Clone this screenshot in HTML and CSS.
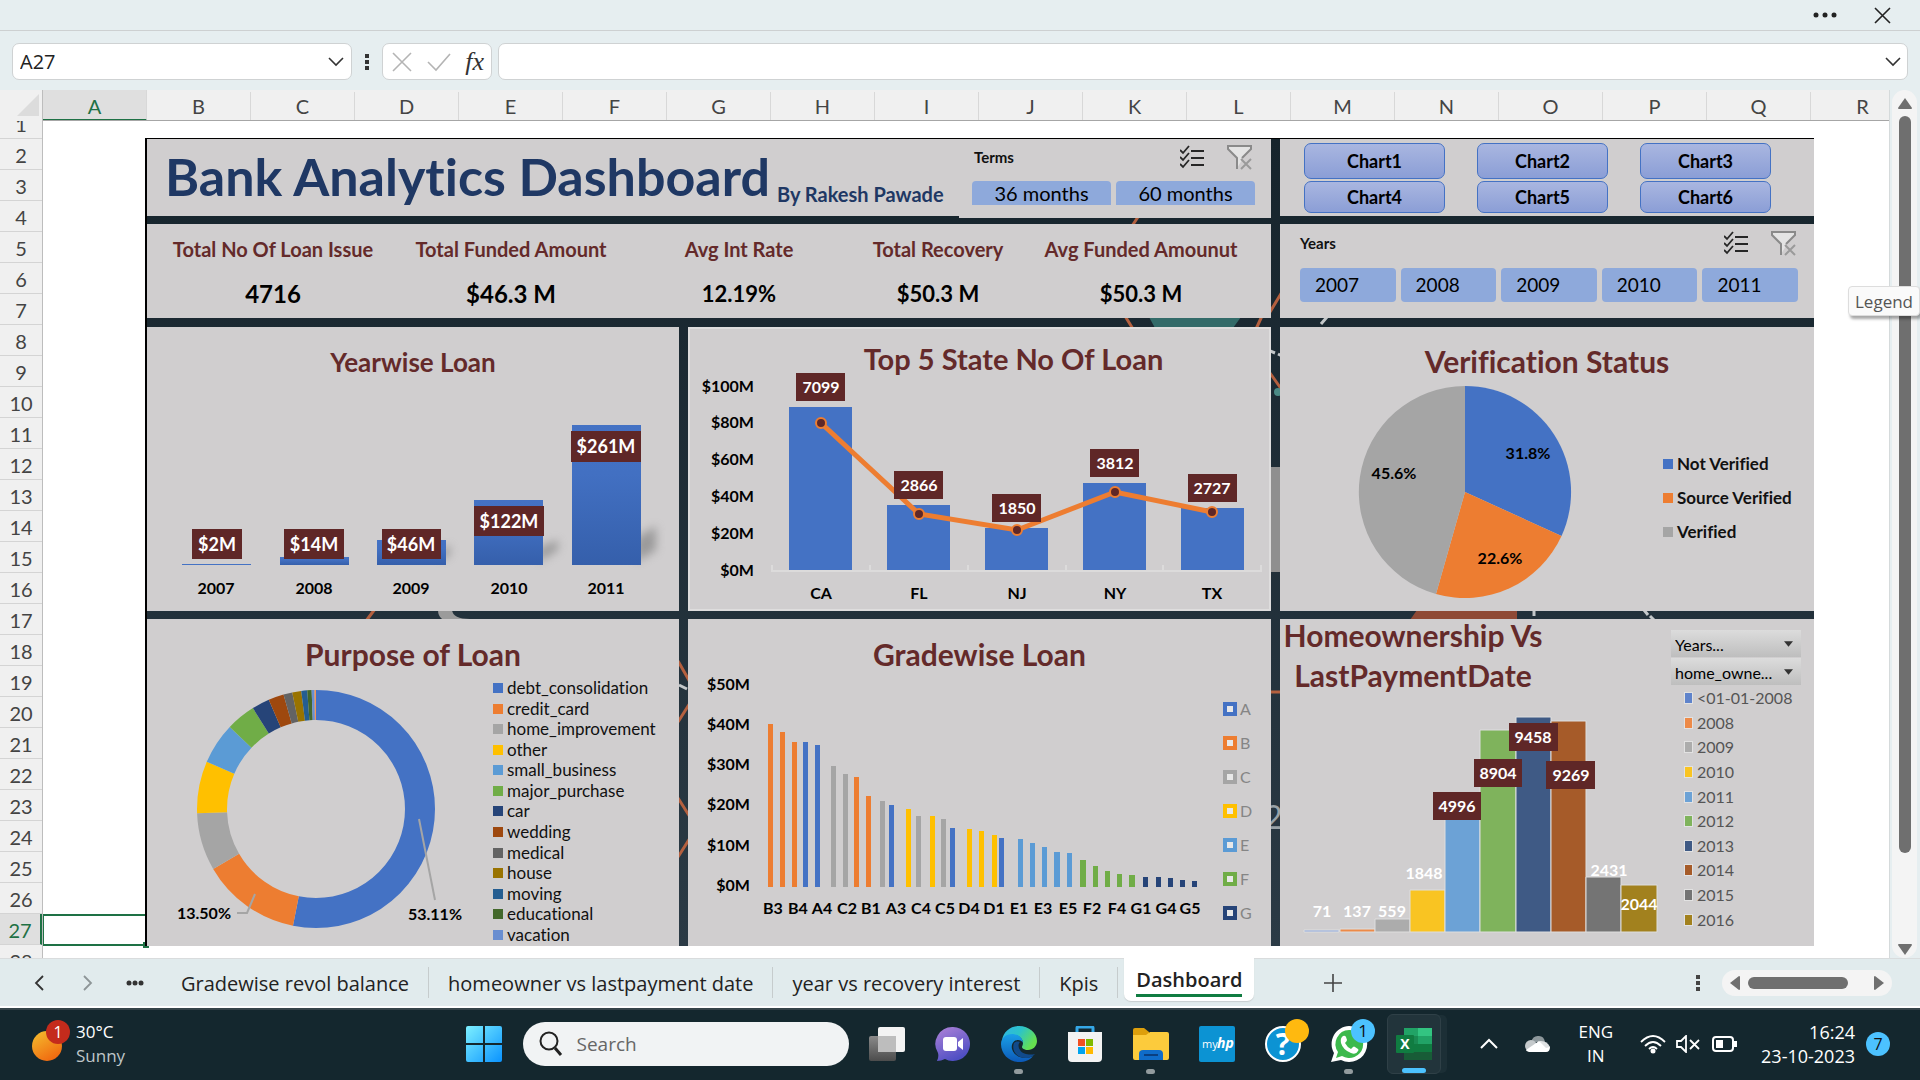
FILE: index.html
```html
<!DOCTYPE html>
<html lang="en">
<head>
<meta charset="utf-8">
<meta name="viewport" content="width=device-width, initial-scale=1">
<title>Bank Analytics Dashboard</title>
<link rel="stylesheet" href="styles.css">
</head>
<body>
<svg class="defs" width="0" height="0" aria-hidden="true">
  <defs>
    <linearGradient id="barBlue" x1="0" y1="0" x2="0" y2="1"><stop offset="0" stop-color="#4472c4"/><stop offset=".35" stop-color="#4270c2"/><stop offset="1" stop-color="#355fab"/></linearGradient>
    <filter id="soft" x="-50%" y="-50%" width="200%" height="200%"><feGaussianBlur stdDeviation="5"/></filter>
    <symbol id="multi" viewBox="0 0 24 24"><path d="M0 5l3 3 6-7M0 12l3 3 6-7M0 19l3 3 6-7M11 6h13M11 13h13M11 20h13" fill="none" stroke="#262626" stroke-width="1.800"/></symbol>
    <symbol id="clear" viewBox="0 0 26 26"><path d="M1 2h23v3l-9 9v2l-5 8V14L1 5z" fill="#e4e4e4"/><path d="M10 25V14L1 5V2h23v3l-9 9" fill="none" stroke="#8a8a8a" stroke-width="2"/><path d="M14 15l10 10M24 15L14 25" stroke="#9a9a9a" stroke-width="2"/></symbol>
    <symbol id="chev" viewBox="0 0 16 10"><path d="M1 1l7 7 7-7" fill="none" stroke="#333" stroke-width="1.600"/></symbol>
  </defs>
</svg>

<header class="titlebar">
  <button class="plain" aria-label="More options"><svg width="24" height="8" viewBox="0 0 24 8"><g fill="#222"><circle cx="3" cy="4" r="2.500"/><circle cx="12" cy="4" r="2.500"/><circle cx="21" cy="4" r="2.500"/></g></svg></button>
  <button class="plain" aria-label="Close"><svg width="18" height="18" viewBox="0 0 18 18"><path d="M1 2l15 15M16 2L1 17" stroke="#222" stroke-width="1.600"/></svg></button>
</header>

<div class="formula-row">
  <div class="box name-box"><input aria-label="Name box" value="A27"><svg width="16" height="10"><use href="#chev"/></svg></div>
  <svg class="grip" width="6" height="18" viewBox="0 0 6 18"><path d="M1 1h4v4H1zM1 7h4v4H1zM1 13h4v4H1z" fill="#333"/></svg>
  <div class="box fx-box">
    <button class="plain" aria-label="Cancel"><svg width="20" height="20" viewBox="0 0 20 20"><path d="M1 1l18 18M19 1L1 19" stroke="#b4b4b4" stroke-width="1.600"/></svg></button>
    <button class="plain" aria-label="Enter"><svg width="24" height="20" viewBox="0 0 24 20"><path d="M1 10l8 8L23 2" fill="none" stroke="#b4b4b4" stroke-width="1.600"/></svg></button>
    <button class="plain fx" aria-label="Insert function">fx</button>
  </div>
  <div class="box formula-box"><input aria-label="Formula bar"><svg width="16" height="10"><use href="#chev"/></svg></div>
</div>

<main class="sheet">
  <div class="corner"><svg width="23" height="23" viewBox="0 0 23 23"><path d="M22 0v22H0z" fill="#dcdcdc"/></svg></div>
  <div class="cols"><span class="on">A</span><span>B</span><span>C</span><span>D</span><span>E</span><span>F</span><span>G</span><span>H</span><span>I</span><span>J</span><span>K</span><span>L</span><span>M</span><span>N</span><span>O</span><span>P</span><span>Q</span><span>R</span></div>
  <div class="vscroll">
    <div class="track">
      <svg width="14" height="12" viewBox="0 0 14 12"><path d="M7 0l7 10q0 1-1 1H1q-1 0-1-1z" fill="#6f6f6f"/></svg>
      <i class="thumb"></i>
      <svg width="14" height="12" viewBox="0 0 14 12"><path d="M7 12l7-10q0-1-1-1H1Q0 1 0 2z" fill="#6f6f6f"/></svg>
    </div>
    <div class="tooltip">Legend</div>
  </div>
  <div class="rows"><span>1</span><span>2</span><span>3</span><span>4</span><span>5</span><span>6</span><span>7</span><span>8</span><span>9</span><span>10</span><span>11</span><span>12</span><span>13</span><span>14</span><span>15</span><span>16</span><span>17</span><span>18</span><span>19</span><span>20</span><span>21</span><span>22</span><span>23</span><span>24</span><span>25</span><span>26</span><span class="on">27</span><span>28</span></div>

  <div class="canvas">
    <div class="selected-cell"></div>
    <div class="dash">
      <svg class="backdrop" viewBox="147 139 1667 807" preserveAspectRatio="none" aria-hidden="true">
        <g fill="none" stroke="#b4603f" stroke-width="3"><path d="M1132 226l8-12M1125 316l8 13M1262 316l-6 13M1270 312l12-20M1270 373l12 17M366 621l9-12M678 661l12 21M678 722l12-19M678 798l12 19M678 857l12-19M1270 692h12"/></g>
        <path d="M1149 317h92l-8 11h-78z" fill="#336b69"/><circle cx="1278" cy="392" r="4" fill="#4b8a85"/>
        <path d="M1271 467h9v105h-9z" fill="#8f8f8f"/>
        <path d="M438 610h14q1 9 18 9h-28q-4-3-4-9z" fill="#9b9b9b"/>
        <path d="M1417 610h100v10h-107z" fill="#8f4a35"/>
        <g stroke="#c4c8ca" stroke-width="3"><path d="M1321 324l6-7M1270 351l5 2M1278 354l4 2M1534 610v6M1644 610l4 5M1650 616l4 4M679 685l8 4"/></g>
        <text x="1264" y="829" font-size="32" fill="#9aa3a8">2</text>
      </svg>

      <section class="panel head">
        <h1>Bank Analytics Dashboard</h1>
        <p class="byline">By Rakesh Pawade</p>
        <div class="slicer terms">
          <div class="slicer-head"><h3>Terms</h3><svg width="24" height="24"><use href="#multi"/></svg><svg width="26" height="26"><use href="#clear"/></svg></div>
          <div class="slicer-items"><button>36 months</button><button>60 months</button></div>
        </div>
      </section>
      <section class="panel links">
        <button>Chart1</button><button>Chart2</button><button>Chart3</button><button>Chart4</button><button>Chart5</button><button>Chart6</button>
      </section>

      <section class="panel kpis">
        <div><h3>Total No Of Loan Issue</h3><p class="big">4716</p></div>
        <div><h3>Total Funded Amount</h3><p class="big">$46.3 M</p></div>
        <div><h3>Avg Int Rate</h3><p>12.19%</p></div>
        <div><h3>Total Recovery</h3><p>$50.3 M</p></div>
        <div><h3>Avg Funded Amounut</h3><p>$50.3 M</p></div>
      </section>
      <section class="panel slicer years">
        <div class="slicer-head"><h3>Years</h3><svg width="24" height="24"><use href="#multi"/></svg><svg width="26" height="26"><use href="#clear"/></svg></div>
        <div class="slicer-items"><button>2007</button><button>2008</button><button>2009</button><button>2010</button><button>2011</button></div>
      </section>

      <section class="panel chart yearwise">
        <h2>Yearwise Loan</h2>
        <svg viewBox="147 327 532 284">
          <g fill="#777" filter="url(#soft)" opacity=".6"><path d="M440 560v-10l10-5v10zM538 562v-14l20-8v10zM636 562v-24l20-12v24z"/></g>
          <path d="M182 564h69v1h-69z" fill="#4472c4"/>
          <g fill="url(#barBlue)"><path d="M280 557h69v8h-69z"/><path d="M377 540h69v25h-69z"/><path d="M474 500h69v65h-69z"/><path d="M572 425h69v140h-69z"/></g>
          <g class="tag"><path d="M192 529h50v30h-50zM284 529h60v30h-60zM382 529h59v30h-59zM474 506h70v30h-70zM571 431h70v31h-70z"/></g>
          <g class="val lg"><text x="217" y="551">$2M</text><text x="314" y="551">$14M</text><text x="411" y="551">$46M</text><text x="509" y="528">$122M</text><text x="606" y="453">$261M</text></g>
          <g class="axis mid"><text x="216" y="594">2007</text><text x="314" y="594">2008</text><text x="411" y="594">2009</text><text x="509" y="594">2010</text><text x="606" y="594">2011</text></g>
        </svg>
      </section>

      <section class="panel chart states">
        <h2>Top 5 State No Of Loan</h2>
        <svg viewBox="688 327 583 284">
          <g class="axis end"><text x="754" y="392">$100M</text><text x="754" y="428">$80M</text><text x="754" y="465">$60M</text><text x="754" y="502">$40M</text><text x="754" y="539">$20M</text><text x="754" y="576">$0M</text></g>
          <path d="M789 407h63v163h-63zM887 505h63v65h-63zM985 528h63v42h-63zM1083 483h63v87h-63zM1181 508h63v62h-63z" fill="#4472c4"/>
          <path d="M772 565v6h489v-6M870 565v6M968 565v6M1066 565v6M1163 565v6" fill="none" stroke="#dcdbdb" stroke-width="2"/>
          <path d="M821 423l98 91 98 16 98-38 97 20" fill="none" stroke="#ed7d31" stroke-width="5"/>
          <g class="tag"><path d="M796 373h49v28h-49zM894 471h49v28h-49zM992 494h49v28h-49zM1090 449h49v28h-49zM1188 474h49v28h-49z"/></g>
          <g fill="#5f2727" stroke="#ed7d31" stroke-width="2"><circle cx="821" cy="423" r="5"/><circle cx="919" cy="514" r="5"/><circle cx="1017" cy="530" r="5"/><circle cx="1115" cy="492" r="5"/><circle cx="1212" cy="512" r="5"/></g>
          <g class="val"><text x="821" y="393">7099</text><text x="919" y="491">2866</text><text x="1017" y="514">1850</text><text x="1115" y="469">3812</text><text x="1212" y="494">2727</text></g>
          <g class="axis mid"><text x="821" y="599">CA</text><text x="919" y="599">FL</text><text x="1017" y="599">NJ</text><text x="1115" y="599">NY</text><text x="1212" y="599">TX</text></g>
        </svg>
      </section>

      <section class="panel chart verify">
        <h2>Verification Status</h2>
        <svg viewBox="1280 327 534 284">
          <path d="M1465 492V386A106 106 0 0 1 1561.500 536z" fill="#4472c4"/>
          <path d="M1465 492L1561.500 536A106 106 0 0 1 1436 594z" fill="#ed7d31"/>
          <path d="M1465 492L1436 594A106 106 0 0 1 1465 386z" fill="#a5a5a5"/>
          <g class="axis mid"><text x="1528" y="459">31.8%</text><text x="1500" y="564">22.6%</text><text x="1394" y="479">45.6%</text></g>
        </svg>
        <ul class="legend"><li class="c1">Not Verified</li><li class="c2">Source Verified</li><li class="c3">Verified</li></ul>
      </section>

      <section class="panel chart purpose">
        <h2>Purpose of Loan</h2>
        <svg viewBox="147 619 532 327">
          <g class="ring" transform="rotate(-90 316 809)">
            <circle cx="316" cy="809" r="104" pathLength="100" stroke="#4472c4" stroke-dasharray="53.1 100"/>
            <circle cx="316" cy="809" r="104" pathLength="100" stroke="#ed7d31" stroke-dasharray="13.5 100" stroke-dashoffset="-53.1"/>
            <circle cx="316" cy="809" r="104" pathLength="100" stroke="#a5a5a5" stroke-dasharray="7.8 100" stroke-dashoffset="-66.6"/>
            <circle cx="316" cy="809" r="104" pathLength="100" stroke="#ffc000" stroke-dasharray="7.1 100" stroke-dashoffset="-74.4"/>
            <circle cx="316" cy="809" r="104" pathLength="100" stroke="#5b9bd5" stroke-dasharray="5.6 100" stroke-dashoffset="-81.5"/>
            <circle cx="316" cy="809" r="104" pathLength="100" stroke="#70ad47" stroke-dasharray="4 100" stroke-dashoffset="-87.1"/>
            <circle cx="316" cy="809" r="104" pathLength="100" stroke="#264478" stroke-dasharray="2.4 100" stroke-dashoffset="-91.1"/>
            <circle cx="316" cy="809" r="104" pathLength="100" stroke="#9e480e" stroke-dasharray="2.1 100" stroke-dashoffset="-93.5"/>
            <circle cx="316" cy="809" r="104" pathLength="100" stroke="#636363" stroke-dasharray="1.2 100" stroke-dashoffset="-95.6"/>
            <circle cx="316" cy="809" r="104" pathLength="100" stroke="#997300" stroke-dasharray="1.2 100" stroke-dashoffset="-96.8"/>
            <circle cx="316" cy="809" r="104" pathLength="100" stroke="#255e91" stroke-dasharray=".8 100" stroke-dashoffset="-98"/>
            <circle cx="316" cy="809" r="104" pathLength="100" stroke="#43682b" stroke-dasharray=".6 100" stroke-dashoffset="-98.8"/>
            <circle cx="316" cy="809" r="104" pathLength="100" stroke="#698ed0" stroke-dasharray=".4 100" stroke-dashoffset="-99.4"/>
            <circle cx="316" cy="809" r="104" pathLength="100" stroke="#f1975a" stroke-dasharray=".2 100" stroke-dashoffset="-99.8"/>
          </g>
          <path d="M237 913h10l8-19M419 819l16 81" fill="none" stroke="#a5a5a5" stroke-width="2"/>
          <g class="axis mid"><text x="204" y="919">13.50%</text><text x="435" y="920">53.11%</text></g>
        </svg>
        <ul class="legend"><li class="c1">debt_consolidation</li><li class="c2">credit_card</li><li class="c3">home_improvement</li><li class="c4">other</li><li class="c5">small_business</li><li class="c6">major_purchase</li><li class="c7">car</li><li class="c8">wedding</li><li class="c9">medical</li><li class="c10">house</li><li class="c11">moving</li><li class="c12">educational</li><li class="c13">vacation</li></ul>
      </section>

      <section class="panel chart grades">
        <h2>Gradewise Loan</h2>
        <svg viewBox="688 619 583 327">
          <g class="axis end"><text x="750" y="690">$50M</text><text x="750" y="730">$40M</text><text x="750" y="770">$30M</text><text x="750" y="810">$20M</text><text x="750" y="851">$10M</text><text x="750" y="891">$0M</text></g>
          <path fill="#ed7d31" d="M768 887V724h5V887zM780 887V732h5V887zM792 887V742h5V887zM854 887V777h5V887zM866 887V796h5V887z"/>
          <path fill="#4472c4" d="M803 887V742h5V887zM815 887V745h5V887zM889 887V805h5V887zM950 887V828h5V887zM999 887V838h5V887z"/>
          <path fill="#a5a5a5" d="M831 887V766h5V887zM843 887V774h5V887zM880 887V801h5V887zM916 887V816h5V887zM941 887V819h5V887z"/>
          <path fill="#ffc000" d="M906 887V809h5V887zM930 887V816h5V887zM967 887V829h5V887zM979 887V831h5V887zM992 887V835h5V887z"/>
          <path fill="#5b9bd5" d="M1018 887V839h5V887zM1030 887V843h5V887zM1042 887V847h5V887zM1054 887V852h6V887zM1067 887V853h5V887z"/>
          <path fill="#70ad47" d="M1080 887V860h6V887zM1093 887V866h5V887zM1105 887V871h5V887zM1117 887V874h5V887zM1129 887V875h6V887z"/>
          <path fill="#264478" d="M1143 887V877h5V887zM1156 887V877h5V887zM1168 887V878h5V887zM1180 887V880h5V887zM1192 887V881h5V887z"/>
          <g class="axis mid"><text x="773" y="914">B3</text><text x="798" y="914">B4</text><text x="822" y="914">A4</text><text x="847" y="914">C2</text><text x="871" y="914">B1</text><text x="896" y="914">A3</text><text x="921" y="914">C4</text><text x="945" y="914">C5</text><text x="969" y="914">D4</text><text x="994" y="914">D1</text><text x="1019" y="914">E1</text><text x="1043" y="914">E3</text><text x="1068" y="914">E5</text><text x="1092" y="914">F2</text><text x="1117" y="914">F4</text><text x="1141" y="914">G1</text><text x="1166" y="914">G4</text><text x="1190" y="914">G5</text></g>
        </svg>
        <ul class="legend"><li class="c1">A</li><li class="c2">B</li><li class="c3">C</li><li class="c4">D</li><li class="c5">E</li><li class="c6">F</li><li class="c7">G</li></ul>
      </section>

      <section class="panel chart homes">
        <h2>Homeownership Vs LastPaymentDate</h2>
        <svg viewBox="1280 619 534 327">
          <g stroke="#dedede" stroke-width="1">
            <path d="M1304 930h35v2h-35z" fill="#8fa8dc"/><path d="M1340 929h35v3h-35z" fill="#ed8a48"/><path d="M1375 919h35v13h-35z" fill="#acacac"/><path d="M1410 890h35v42h-35z" fill="#f9c422"/><path d="M1445 816h35v116h-35z" fill="#6ca2d6"/><path d="M1480 730h36v202h-36z" fill="#7fb35c"/><path d="M1516 717h35v215h-35z" fill="#3f5a85"/><path d="M1551 721h35v211h-35z" fill="#a65b29"/><path d="M1586 877h35v55h-35z" fill="#747474"/><path d="M1621 885h36v47h-36z" fill="#a2811e"/>
          </g>
          <g class="tag"><path d="M1433 792h48v28h-48zM1474 759h48v28h-48zM1546 761h49v28h-49zM1509 723h49v28h-49z"/></g>
          <g class="val"><text x="1322" y="917">71</text><text x="1357" y="917">137</text><text x="1392" y="917">559</text><text x="1424" y="879">1848</text><text x="1457" y="812">4996</text><text x="1498" y="779">8904</text><text x="1533" y="743">9458</text><text x="1571" y="781">9269</text><text x="1609" y="876">2431</text><text x="1639" y="910">2044</text></g>
        </svg>
        <aside>
          <select aria-label="Years field"><option>Years...</option></select>
          <select aria-label="Home ownership field"><option>home_owne...</option></select>
          <ul class="legend"><li class="h1">&lt;01-01-2008</li><li class="h2">2008</li><li class="h3">2009</li><li class="h4">2010</li><li class="h5">2011</li><li class="h6">2012</li><li class="h7">2013</li><li class="h8">2014</li><li class="h9">2015</li><li class="h10">2016</li></ul>
        </aside>
      </section>
    </div>
  </div>
</main>

<nav class="tabs">
  <button class="plain prev" aria-label="Previous sheet"><svg width="10" height="16" viewBox="0 0 10 16"><path d="M9 1L2 8l7 7" fill="none" stroke="#333" stroke-width="1.800"/></svg></button>
  <button class="plain next" aria-label="Next sheet"><svg width="10" height="16" viewBox="0 0 10 16"><path d="M1 1l7 7-7 7" fill="none" stroke="#8d9597" stroke-width="1.800"/></svg></button>
  <button class="plain all" aria-label="All sheets"><svg width="18" height="6" viewBox="0 0 18 6"><g fill="#333"><circle cx="3" cy="3" r="2.500"/><circle cx="9" cy="3" r="2.500"/><circle cx="15" cy="3" r="2.500"/></g></svg></button>
  <a href="#gradewise">Gradewise revol balance</a>
  <a href="#homeowner">homeowner vs lastpayment date</a>
  <a href="#recovery">year vs recovery interest</a>
  <a href="#kpis">Kpis</a>
  <a class="active" href="#dashboard"><span>Dashboard</span></a>
  <button class="plain add" aria-label="New sheet"><svg width="18" height="18" viewBox="0 0 18 18"><path d="M9 0v18M0 9h18" stroke="#444" stroke-width="1.600"/></svg></button>
  <svg class="grip" width="6" height="16" viewBox="0 0 6 16"><path d="M1 0h4v4H1zM1 6h4v4H1zM1 12h4v4H1z" fill="#444"/></svg>
  <div class="hscroll"><svg width="10" height="14" viewBox="0 0 10 14"><path d="M0 7l9-7q1 0 1 1v12q0 1-1 1z" fill="#6f6f6f"/></svg><i class="thumb"></i><svg width="10" height="14" viewBox="0 0 10 14"><path d="M10 7L1 0Q0 0 0 1v12q0 1 1 1z" fill="#6f6f6f"/></svg></div>
</nav>

<footer class="taskbar">
  <div class="weather">
    <svg width="40" height="44" viewBox="0 0 40 44"><defs><linearGradient id="sun" x1="0" y1="0" x2=".6" y2="1"><stop offset="0" stop-color="#f5c02f"/><stop offset="1" stop-color="#f06a10"/></linearGradient></defs><circle cx="16" cy="28" r="15" fill="url(#sun)"/><circle cx="27" cy="14" r="12" fill="#c42b1c"/><text x="27" y="20" font-size="16" text-anchor="middle" fill="#fff">1</text></svg>
    <p>30°C<br><span>Sunny</span></p>
  </div>
  <div class="apps">
    <button class="plain" aria-label="Start"><svg width="36" height="36" viewBox="0 0 36 36"><defs><linearGradient id="win" x1="0" y1="0" x2="1" y2="1"><stop offset="0" stop-color="#7df0ff"/><stop offset="1" stop-color="#0a93ff"/></linearGradient></defs><path d="M2 0h15v17H0V2q0-2 2-2zM19 0h15q2 0 2 2v15H19zM0 19h17v17H2q-2 0-2-2zM19 19h17v15q0 2-2 2H19z" fill="url(#win)"/></svg></button>
    <label class="search"><svg width="24" height="26" viewBox="0 0 24 26"><circle cx="10" cy="10" r="8.500" fill="none" stroke="#222" stroke-width="2"/><path d="M16 17l6 7" stroke="#222" stroke-width="3"/></svg><input type="search" placeholder="Search" aria-label="Search"></label>
    <button class="app" aria-label="Task view"><svg width="36" height="36" viewBox="0 0 36 36"><defs><linearGradient id="tv" x1="0" y1="0" x2="0" y2="1"><stop offset="0" stop-color="#8a8a8a"/><stop offset="1" stop-color="#4c4c4c"/></linearGradient></defs><rect x="9" y="1" width="27" height="25" rx="2" fill="#f3f3f3"/><rect x="0" y="10" width="27" height="25" rx="2" fill="url(#tv)"/><path d="M9 10h18v16H9z" fill="#bdbdbd"/></svg></button>
    <button class="app" aria-label="Chat"><svg width="36" height="36" viewBox="0 0 36 36"><defs><linearGradient id="mt" x1="0" y1="0" x2=".5" y2="1"><stop offset="0" stop-color="#b083d8"/><stop offset="1" stop-color="#4f4fc4"/></linearGradient></defs><path d="M18 1a17 17 0 1 1-8 32q-4 2-8 2 2-4 1-8A17 17 0 0 1 18 1z" fill="url(#mt)"/><rect x="8" y="11" width="14" height="14" rx="3" fill="#fff"/><path d="M23 16l5-4v12l-5-4z" fill="#fff"/></svg></button>
    <button class="app run" aria-label="Edge"><svg width="36" height="36" viewBox="0 0 36 36"><defs><linearGradient id="e1" x1="0" y1="0" x2="1" y2=".5"><stop offset="0" stop-color="#2fb4e8"/><stop offset=".5" stop-color="#2cc3c9"/><stop offset="1" stop-color="#66e04f"/></linearGradient><linearGradient id="e2" x1="0" y1="0" x2="0" y2="1"><stop offset="0" stop-color="#1aa0e8"/><stop offset="1" stop-color="#0c59b8"/></linearGradient></defs><path d="M1 15C2 6 9 0 18 0c10 0 18 7 18 15 0 5-4 9-9 9-4 0-6-2-6-3s1-2 1-4c0-4-4-8-9-8-6 0-10 3-12 6z" fill="url(#e1)"/><path d="M0 18c0-6 5-10 11-10s11 4 11 9c0 0-1-3-5-3-5 0-7 5-6 9 2 7 9 9 13 9 3 0 6-1 8-2-3 4-8 6-14 6C8 36 0 28 0 18z" fill="url(#e2)"/><path d="M13 17c-3 8 3 15 12 15 4 0 7-2 9-4-4 1-12 1-15-4-2-3-2-6 0-8-3-1-5 0-6 1z" fill="#114a8b"/></svg></button>
    <button class="app" aria-label="Store"><svg width="36" height="36" viewBox="0 0 36 36"><path d="M10 7V2q0-1 1-1h14q1 0 1 1v5" fill="none" stroke="#35a7e6" stroke-width="3"/><path d="M1 6h34v26q0 4-4 4H5q-4 0-4-4z" fill="#f3f3f3"/><path d="M11 13h7v7h-7z" fill="#f25022"/><path d="M19 13h7v7h-7z" fill="#7fba00"/><path d="M11 21h7v7h-7z" fill="#00a4ef"/><path d="M19 21h7v7h-7z" fill="#ffb900"/></svg></button>
    <button class="app run" aria-label="File Explorer"><svg width="36" height="36" viewBox="0 0 36 36"><path d="M0 10V4q0-2 2-2h9l5 4v6z" fill="#dd9f0c"/><path d="M0 9h13l4-3h17q2 0 2 2v24q0 2-2 2H2q-2 0-2-2z" fill="#fccb3c"/><path d="M6 34v-6q0-4 4-4h16q4 0 4 4v6z" fill="#0f6cc9"/><path d="M11 29h14" stroke="#0a3f80" stroke-width="2"/></svg></button>
    <button class="app" aria-label="myHP"><svg width="36" height="36" viewBox="0 0 36 36"><rect width="36" height="36" rx="2" fill="#0c93d3"/><text x="3" y="22" font-size="11" fill="#fff">my</text><text x="18" y="22" font-size="14" font-weight="700" font-style="italic" fill="#fff">hp</text></svg></button>
    <button class="app" aria-label="Help"><svg width="36" height="36" viewBox="0 0 36 36" overflow="visible"><circle cx="18" cy="18" r="17" fill="#0c93d3" stroke="#fff" stroke-width="2"/><text x="18" y="29" font-size="30" font-weight="700" text-anchor="middle" fill="#fff">?</text><circle cx="32" cy="5" r="12" fill="#ffb90f"/></svg></button>
    <button class="app run" aria-label="WhatsApp"><svg width="36" height="36" viewBox="0 0 36 36" overflow="visible"><path d="M18 0a18 18 0 1 1-8 34L0 36l3-9A18 18 0 0 1 18 0z" fill="#fff"/><path d="M18 4a14 14 0 1 1-7 26l-6 2 2-6A14 14 0 0 1 18 4z" fill="#3cb94c"/><path d="M12 10q2-1 3 1l1 3q0 1-2 3 2 4 6 6l2-2q1-1 2 0l3 2q1 1 0 2-2 4-7 2-8-3-10-10-1-5 2-7z" fill="#fff"/><circle cx="32" cy="5" r="12" fill="#4cc2ff"/><text x="32" y="11" font-size="17" text-anchor="middle" fill="#111">1</text></svg></button>
    <button class="app current" aria-label="Excel"><svg width="36" height="36" viewBox="0 0 36 36"><path d="M8 2h14v8H8z" fill="#21a366"/><path d="M22 2h14v8H22z" fill="#33c481"/><path d="M8 10h14v8H8z" fill="#1a8a52"/><path d="M22 10h14v8H22z" fill="#21a366"/><path d="M8 18h28v8H8z" fill="#107c41"/><path d="M8 26h28v8H8z" fill="#185c37"/><rect y="9" width="18" height="18" rx="1" fill="#107c41"/><text x="9" y="23" font-size="14" font-weight="700" text-anchor="middle" fill="#fff">X</text></svg></button>
  </div>
  <div class="tray">
    <svg width="18" height="12" viewBox="0 0 18 12"><path d="M1 10l8-8 8 8" fill="none" stroke="#fff" stroke-width="2"/></svg>
    <svg class="cloud" width="26" height="18" viewBox="0 0 26 18"><path d="M6 7q2-7 8-6 5 0 6 6z" fill="#8d979b"/><circle cx="6" cy="11" r="6" fill="#c4c9cb"/><path d="M6 17q-4 0-5-2L14 6l11 6q0 5-4 5z" fill="#fff"/><path d="M14 6q8-1 11 6l-4 1z" fill="#dfe2e3"/></svg>
    <p class="lang">ENG<br>IN</p>
    <svg class="wifi" width="26" height="20" viewBox="0 0 26 20"><g fill="none" stroke="#fff" stroke-width="1.800"><path d="M1 8q12-12 24 0M5 12q8-8 16 0M9 15q4-4 8 0"/></g><circle cx="13" cy="17" r="2.500" fill="#fff"/></svg>
    <svg width="24" height="18" viewBox="0 0 24 18"><path d="M1 6v6h4l5 5V1L5 6zM14 5l9 9M23 5l-9 9" fill="none" stroke="#fff" stroke-width="1.800"/></svg>
    <svg class="battery" width="26" height="16" viewBox="0 0 26 16"><rect x="1" y="1" width="20" height="14" rx="3" fill="none" stroke="#fff" stroke-width="2"/><path d="M4 4h7v8H4zM22 5h3v6h-3z" fill="#fff"/></svg>
    <p class="clock">16:24<br>23-10-2023</p>
    <span class="notice">7</span>
  </div>
</footer>
</body>
</html>
```
FILE: styles.css
```css
*, *::before, *::after { box-sizing: border-box; }
body {
  margin: 0;
  min-height: 100vh;
  display: flex;
  flex-direction: column;
  font-family: "Open Sans", "Noto Sans", sans-serif;
  background: #e6eef0;
  color: #222;
}
h1, h2, h3, p, ul { margin: 0; padding: 0; }
button, input, select { font: inherit; color: inherit; }
svg { display: block; flex: none; }
.defs { position: absolute; }
.plain { border: 0; padding: 0; background: none; }

/* window chrome */
.titlebar {
  height: 31px;
  border-bottom: 1px solid #cdd0d1;
  display: flex;
  justify-content: flex-end;
  align-items: center;
  gap: 37px;
  padding-right: 28px;
}
.formula-row { height: 59px; display: flex; align-items: center; padding: 2px 12px 0; }
.box {
  height: 37px;
  background: #fff;
  border: 1px solid #cfd2d3;
  border-radius: 7px;
  display: flex;
  align-items: center;
}
.box input { flex: 1; min-width: 0; border: 0; outline: 0; background: none; padding: 0; font-size: 20px; line-height: 28px; }
.name-box { width: 340px; padding: 0 7px; }
.formula-row .grip { margin: 0 12px; }
.fx-box { width: 110px; justify-content: space-between; padding: 0 7px 0 9px; margin-right: 6px; }
.fx { font: italic 26px/28px "Liberation Serif", serif; color: #333; }
.formula-box { flex: 1; padding: 0 6px; }

/* spreadsheet frame */
.sheet { flex: 1; display: grid; grid-template-columns: 43px minmax(0, 1fr) 31px; grid-template-rows: 31px 1fr; background: #fff; }
.corner { background: #f0f0f0; border-right: 1px solid #bdbdbd; display: flex; justify-content: flex-end; padding: 4px 2px; }
.cols { display: flex; overflow: hidden; background: #f0f0f0; border-bottom: 1px solid #a6a6a6; font: 20px/30px Lato, sans-serif; color: #444; padding-top: 2px; }
.cols span { flex: none; width: 104px; height: 28px; line-height: 28px; text-align: center; border-right: 1px solid #d8d8d8; }
.cols .on { height: 31px; margin-top: -2px; padding-top: 2px; background: #dfdfdf; color: #1e7145; border-bottom: 2px solid #1e7145; }
.rows { background: #f0f0f0; border-right: 1px solid #bdbdbd; font: 20px/33px Lato, sans-serif; color: #444; display: flex; flex-direction: column; overflow: hidden; }
.rows span { flex: none; height: 31px; text-align: center; border-bottom: 1px solid #d4d4d4; }
.rows span:first-child { height: 18px; line-height: 7px; overflow: hidden; }
.rows span:last-child { flex: 1 1 0; overflow: hidden; border: 0; }
.rows .on { background: #dfdfdf; color: #1e7145; border-right: 2px solid #1e7145; }
.vscroll { grid-column: 3; grid-row: 1 / 3; background: #e6eef0; border-left: 1px solid #d5dadb; padding: 0 3px 0 2px; position: relative; }
.track { height: 100%; background: #f4f4f4; border-radius: 13px; display: flex; flex-direction: column; align-items: center; padding: 8px 0 3px; }
.thumb { background: #6f6f6f; border-radius: 6px; }
.track .thumb { width: 12px; margin: 6px 0 90px; flex: 1; }
.tooltip { position: absolute; right: 0; top: 196px; width: 72px; height: 30px; padding-left: 6px; background: #fafafa; border: 1px solid #ddd; border-radius: 4px; box-shadow: 2px 3px 3px rgba(0, 0, 0, .35); font-size: 17px; line-height: 30px; color: #555; }
.canvas { position: relative; overflow: hidden; }
.selected-cell { position: absolute; left: -1px; top: 793px; width: 105px; height: 32px; border: 2px solid #1e7145; }
.selected-cell::after { content: ""; position: absolute; right: -4px; bottom: -4px; width: 6px; height: 6px; background: #1e7145; }

/* dashboard */
.dash {
  position: relative;
  margin: 17px 75px 0 102px;
  border: solid #000;
  border-width: 1px 0 0 2px;
  background: linear-gradient(#16242c, #2b3a45);
  display: grid;
  grid-template-columns: 532fr 583fr 534fr;
  grid-template-rows: 77px 94px 285px 327px;
  column-gap: 9px;
  row-gap: 8px;
  font-family: Lato, sans-serif;
  font-variant-ligatures: none;
  clip-path: inset(0);
}
.backdrop { position: absolute; width: 100%; height: 100%; }
.panel { position: relative; background: #d0cecf; min-width: 0; }
.head, .kpis { grid-column: 1 / 3; }
.yearwise, .states, .verify { margin-top: 1px; }
.head { display: flex; align-items: flex-end; color: #1f3864; padding-left: 18px; }
.head h1 { font-size: 52px; line-height: 56px; margin-bottom: 12px; white-space: nowrap; }
.byline { font-size: 20px; line-height: 24px; font-weight: 700; margin: 0 0 10px 7px; white-space: nowrap; }
.slicer { color: #111; }
.slicer-head { display: flex; align-items: center; }
.slicer-head h3 { font-size: 15px; line-height: 24px; flex: 1; }
.slicer-head svg + svg { margin-left: 23px; }
.slicer-items { display: flex; gap: 5px; }
.slicer-items button { flex: 1; border: 0; border-radius: 4px; background: #8ea9db; color: #000; font-size: 19px; padding: 0; }
.terms { width: 312px; margin: 0 0 -2px auto; height: 79px; padding: 5px 16px 0 13px; background: #d0cecf; }
.terms .slicer-head { padding: 0 2px; margin-bottom: 11px; }
.terms .slicer-items button { height: 24px; line-height: 24px; font-size: 20px; border-radius: 4px 4px 0 0; }
.years { padding: 6px 16px 0 20px; }
.years .slicer-head { padding-right: 1px; margin-bottom: 12px; }
.years button { height: 34px; line-height: 34px; text-align: left; padding-left: 15px; }
.links { display: grid; grid-template-columns: 141fr 131fr 131fr; grid-template-rows: 36px 32px; column-gap: 32px; row-gap: 2px; padding: 4px 43px 0 24px; }
.links button { border: 1px solid #4472c4; border-radius: 7px; background: linear-gradient(#a9b6e0, #8b9ed6); color: #000; font-size: 18px; font-weight: 700; padding: 0; }
.kpis { display: grid; grid-template-columns: 252fr 224fr 232fr 166fr 240fr; padding: 13px 10px 0 0; text-align: center; white-space: nowrap; }
.kpis > div { min-width: 0; display: flex; flex-direction: column; align-items: center; }
.kpis h3 { font-size: 20px; line-height: 24px; color: #642a2a; }
.kpis p { font-size: 22px; line-height: 28px; margin-top: 19px; font-weight: 700; color: #000; }
.kpis .big { font-size: 24px; }

/* charts */
.chart { display: grid; }
.chart > * { grid-area: 1 / 1; }
.chart > svg { width: 100%; height: 100%; }
.chart h2 { font-size: 30px; line-height: 32px; color: #642a2a; text-align: center; padding-top: 18px; }
.chart text { font-size: 16px; font-weight: 700; }
.axis { fill: #000; }
.mid, .val { text-anchor: middle; }
.end { text-anchor: end; }
.tag { fill: #5f2727; }
.val { fill: #fff; }
.chart .lg text { font-size: 18px; }
.yearwise h2 { font-size: 26px; padding-top: 19px; }
.states { outline: 2px solid #dedddd; outline-offset: -2px; }
.states h2 { font-size: 29px; padding: 16px 0 0 68px; }
.purpose h2, .grades h2 { padding-top: 19px; }
.homes h2 { width: 266px; line-height: 40px; padding-top: 0; margin-top: -4px; }
.ring { fill: none; stroke-width: 30; }
.legend { list-style: none; font-size: 17px; line-height: 20px; white-space: nowrap; display: flex; flex-direction: column; color: #111; }
.legend li { flex: 1; display: flex; align-items: center; gap: 4px; }
.legend li::before { content: ""; width: 10px; height: 10px; background: var(--c); }
.verify .legend { width: 151px; height: 102px; margin-top: 120px; justify-self: end; font-weight: 700; }
.purpose .legend { width: 186px; height: 267px; margin-top: 59px; justify-self: end; }
.grades .legend { width: 48px; height: 238px; margin-top: 73px; justify-self: end; font-size: 16px; color: #858585; }
.grades .legend li::before { width: 14px; height: 14px; border: 4px solid var(--c); background: #e8e8e8; }
.grades .legend li { gap: 3px; }
.homes aside { width: 130px; justify-self: end; margin: 11px 13px 0 0; }
.homes select {
  display: block;
  width: 100%;
  height: 27px;
  margin-bottom: 1px;
  padding: 1px 4px 0;
  border: 0;
  border-radius: 0;
  appearance: none;
  font-size: 16px;
  color: #000;
  background:
    url("data:image/svg+xml,%3Csvg xmlns='http://www.w3.org/2000/svg' viewBox='0 0 10 6'%3E%3Cpath d='M0 0h10L5 6z' fill='%23333'/%3E%3C/svg%3E") 113px 11px / 9px 6px no-repeat,
    linear-gradient(#dcdcdc, #bebebe);
}
.homes .legend { height: 246px; margin-left: 13px; font-size: 16px; color: #555; }
.homes .legend li::before { width: 9px; height: 12px; border: 1px solid #e2e2e2; }
.c1 { --c: #4472c4; } .c2 { --c: #ed7d31; } .c3 { --c: #a5a5a5; } .c4 { --c: #ffc000; }
.c5 { --c: #5b9bd5; } .c6 { --c: #70ad47; } .c7 { --c: #264478; } .c8 { --c: #9e480e; }
.c9 { --c: #636363; } .c10 { --c: #997300; } .c11 { --c: #255e91; } .c12 { --c: #43682b; } .c13 { --c: #698ed0; }
.h1 { --c: #5f83cb; } .h2 { --c: #ed8a48; } .h3 { --c: #acacac; } .h4 { --c: #f9c422; } .h5 { --c: #6ca2d6; }
.h6 { --c: #7fb35c; } .h7 { --c: #3f5a85; } .h8 { --c: #a65b29; } .h9 { --c: #747474; } .h10 { --c: #a2811e; }

/* sheet tabs */
.tabs { height: 50px; border-top: 1px solid #d9dcdd; border-bottom: 2px solid #fff; display: flex; align-items: center; padding: 0 28px 0 34px; background: #e1ebed; }
.tabs .next { margin-left: 39px; }
.tabs .all { margin-left: 33px; margin-right: 18px; }
.tabs a { font-size: 20px; line-height: 28px; color: #222; text-decoration: none; padding: 3px 19px 0; border-right: 1px solid #c6cccd; white-space: nowrap; }
.tabs a.active { align-self: flex-start; height: 43px; margin: -1px 6px 0; padding: 7px 12px 0; background: #fff; border: 0; border-radius: 0 0 7px 7px; font-weight: 600; box-shadow: 0 1px 1px #c9cfd0; }
.active span { display: block; line-height: 29px; border-bottom: 3px solid #107c41; }
.tabs .add { margin-left: 64px; }
.tabs .grip { margin: 0 21px 0 auto; }
.hscroll { width: 170px; height: 26px; border-radius: 13px; background: #f4f4f4; display: flex; align-items: center; padding: 0 8px; }
.hscroll .thumb { width: 100px; height: 12px; margin: 0 auto 0 8px; }

/* taskbar */
.taskbar { height: 72px; background: #14272e; border-top: 2px solid #35444a; display: grid; grid-template-columns: 1fr auto 1fr; color: #fff; }
.weather { display: flex; align-items: center; padding: 0 0 2px 31px; gap: 5px; font-size: 17px; line-height: 24px; }
.weather svg { margin-top: -8px; }
.weather span { color: #bfc6c8; }
.apps { display: flex; align-items: center; margin-right: 14px; padding-bottom: 2px; }
.search { width: 326px; height: 44px; margin: 0 5px 0 21px; border-radius: 22px; background: #f1f3f4; display: flex; align-items: center; padding-left: 16px; gap: 14px; }
.search input { flex: 1; min-width: 0; border: 0; outline: 0; padding: 0; background: none; font-size: 19px; }
.search input::placeholder { color: #666; opacity: 1; }
.app { width: 66px; height: 60px; border: 0; padding: 0; background: none; display: flex; flex-direction: column; align-items: center; justify-content: center; position: relative; }
.run::after, .current::after { content: ""; position: absolute; bottom: 0; width: 9px; height: 5px; border-radius: 3px; background: #929b9e; }
.current { width: 54px; margin-left: 5px; border: 1px solid #2f4047; border-radius: 6px; background: #22343b; box-shadow: 7px 0 0 -1px #1c2f36; }
.current::after { width: 24px; background: #4cc2ff; }
.tray { display: flex; align-items: center; justify-content: flex-end; padding: 0 30px 2px 0; font-size: 17px; line-height: 24px; }
.cloud { margin-left: 27px; }
.lang { text-align: center; margin: 0 27px; }
.wifi { margin-right: 10px; }
.battery { margin: 0 23px 0 12px; }
.clock { text-align: right; font-size: 18px; }
.notice { width: 24px; height: 24px; margin-left: 11px; border-radius: 12px; background: #4cc2ff; color: #111; text-align: center; font-size: 16px; }
```
